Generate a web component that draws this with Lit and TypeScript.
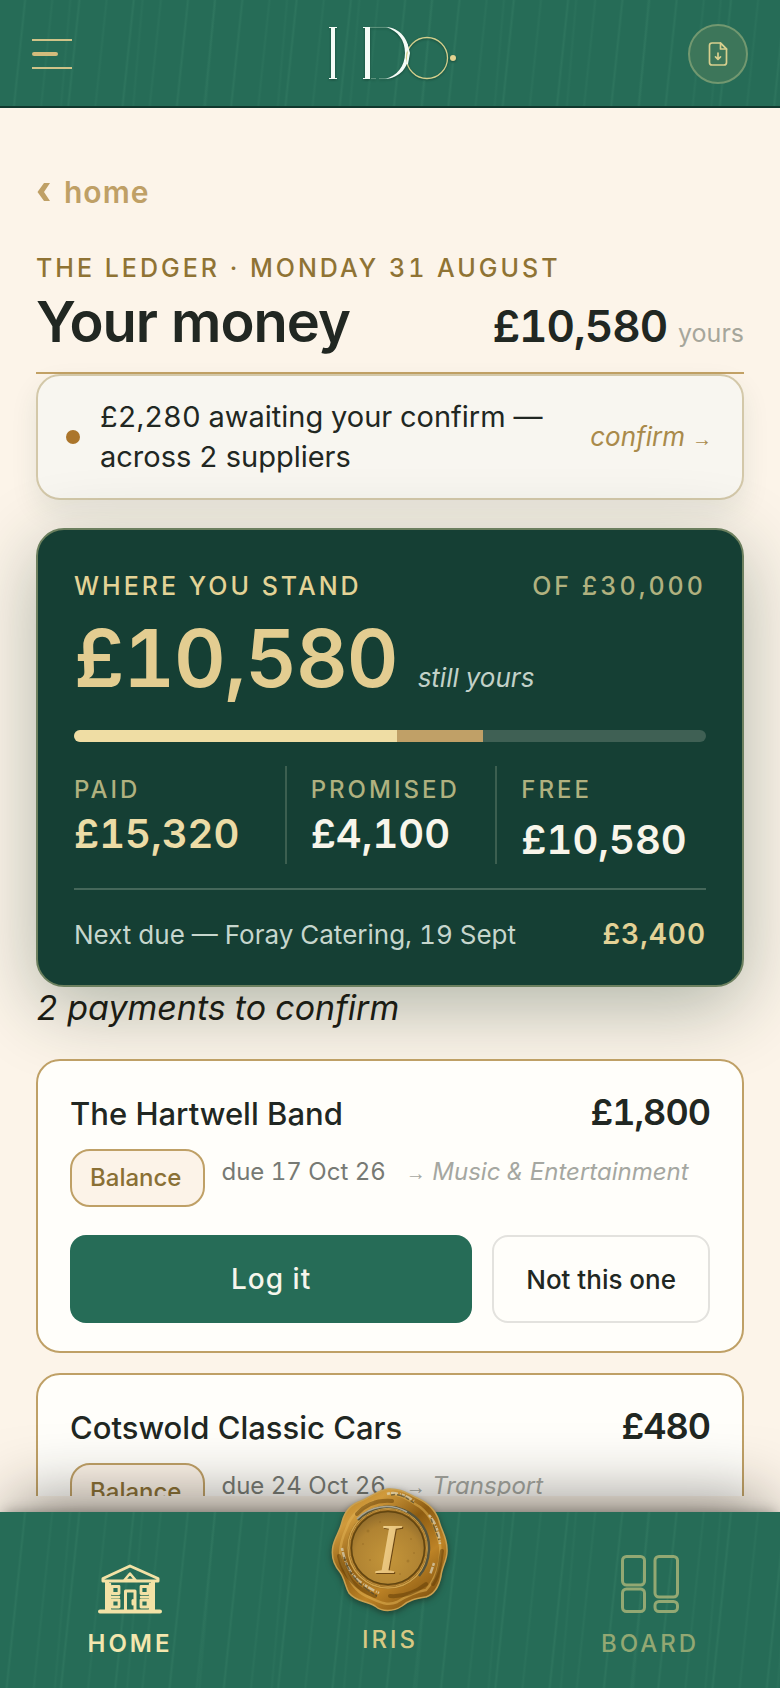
import { LitElement, html, css, svg } from "lit";
import { customElement, property } from "lit/decorators.js";

interface Payment {
  supplier: string;
  amount: string;
  kind: string;
  due: string;
  category: string;
}

const budget = { total: 30000, paid: 15320, promised: 4100 };

const payments: Payment[] = [
  { supplier: "The Hartwell Band", amount: "£1,800", kind: "Balance", due: "due 17 Oct 26", category: "Music & Entertainment" },
  { supplier: "Cotswold Classic Cars", amount: "£480", kind: "Balance", due: "due 24 Oct 26", category: "Transport" },
];

const pounds = (n: number) => `£${n.toLocaleString("en-GB")}`;
const share = (n: number) => `width:${(n / budget.total) * 100}%`;

const logo = svg`
  <svg class="logo" viewBox="0 0 128 58" width="128" height="58" role="img" aria-label="I Do">
    <g fill="#f4fbf6">
      <rect x="2" y="2" width="4" height="52" />
      <rect x="0" y="2" width="8" height="1" />
      <rect x="0" y="53" width="8" height="1" />
      <rect x="36" y="2" width="5" height="52" />
      <rect x="34" y="2" width="7" height="1" />
      <rect x="34" y="53" width="7" height="1" />
      <path d="M57 2C71 3 80 14 80 28S71 53 56 54C68 51 76 41 76 28S69 6 57 2Z" />
    </g>
    <path d="M41 2.400H58M42 53.600H47M50 53.600H57" stroke="#7fae97" stroke-width=".7" fill="none" />
    <circle cx="98" cy="33" r="20.500" fill="none" stroke="#d3cf8d" stroke-width="1.300" />
    <path d="M77.500 19L80 28L78 39" fill="none" stroke="#f4fbf6" stroke-width="2" />
    <circle cx="124" cy="33" r="3" fill="#e3d391" />
  </svg>`;

const fileIcon = svg`
  <svg viewBox="0 0 24 24" width="24" height="24" fill="none" stroke="#d8cf8e" stroke-width="1.700" stroke-linecap="round" stroke-linejoin="round" aria-hidden="true">
    <path d="M14.500 1H6Q3.500 1 3.500 3.500V20.500Q3.500 23 6 23H18Q20.500 23 20.500 20.500V7Z" />
    <path d="M14.500 1V7H20.500Z" />
    <path d="M12 11V17M9.500 14.800L12 17.300L14.500 14.800" />
  </svg>`;

const homeIcon = svg`
  <svg viewBox="0 0 64 50" width="64" height="50" fill="none" stroke="#f3e2a6" stroke-width="3" stroke-linecap="round" stroke-linejoin="round" aria-hidden="true">
    <path d="M5 17V14.500L32 2L60 14.500V17Z" />
    <path d="M26.500 16L32 9.500L37.500 16Z" stroke-width="2.500" />
    <path d="M9 18V46M55 18V46M2 47.500H62" stroke-width="4" />
    <path d="M14 22.500H21V29.500H14ZM43 22.500H50V29.500H43ZM14 36H21V43H14ZM43 36H50V43H43Z" stroke-width="2.800" />
    <path d="M12 20V46M14 33H21M43 33H50M52 20V46" stroke-width="2.400" />
    <path d="M27.500 46V27H37V46" />
    <path d="M35 36.500V40" stroke-width="3" />
  </svg>`;

const boardIcon = svg`
  <svg viewBox="0 0 60 60" width="60" height="60" fill="none" stroke="#93a873" stroke-width="3" aria-hidden="true">
    <rect x="2.500" y="2.500" width="22" height="28.500" rx="4" />
    <rect x="2.500" y="35" width="22" height="22.500" rx="4" />
    <rect x="35" y="2.500" width="22.500" height="40.500" rx="4" />
    <rect x="35" y="47.500" width="22.500" height="10" rx="4" />
  </svg>`;

const seal = svg`
  <svg class="seal" viewBox="0 0 120 124" width="120" height="124" aria-hidden="true">
    <defs>
      <linearGradient id="rim" x1=".1" y1="0" x2=".8" y2="1">
        <stop offset="0" stop-color="#b98122" />
        <stop offset=".2" stop-color="#d09a3c" />
        <stop offset=".45" stop-color="#8d5c12" />
        <stop offset=".7" stop-color="#bd8326" />
        <stop offset="1" stop-color="#7c4f0e" />
      </linearGradient>
      <radialGradient id="face" cx=".5" cy=".65" r=".65">
        <stop offset="0" stop-color="#c4953a" />
        <stop offset=".7" stop-color="#b08332" />
        <stop offset="1" stop-color="#8f6a2a" />
      </radialGradient>
      <linearGradient id="letter" x1="0" y1="0" x2="1" y2="1">
        <stop offset="0" stop-color="#f3d896" />
        <stop offset="1" stop-color="#e0b468" />
      </linearGradient>
    </defs>
    <path d="M58 1C70 0 78 6 87 10C98 15 106 23 109 33C111 42 117 49 117 61C118 71 112 78 111 88C109 98 105 106 96 109C85 111 79 112 72 118C63 124 52 124 45 118C37 113 26 114 19 105C15 98 15 91 10 84C3 76 1 68 3 58C5 49 10 43 12 34C15 22 22 16 31 13C41 9 48 2 58 1Z" fill="url(#rim)" stroke="#c9a050" stroke-width="1.500" />
    <path d="M58 6C70 5 80 13 90 19C102 28 106 42 110 57C112 74 105 92 96 102C84 104 75 109 67 114C56 119 46 112 36 108C24 103 20 92 14 80C7 68 11 52 17 39C22 24 33 19 44 13" fill="none" stroke="#e0b052" stroke-width="2.500" opacity=".55" />
    <path d="M27 26C37 15 50 12 62 13M9 68C13 88 28 102 45 108M103 96C109 88 110 76 112 63M60 108C74 109 86 104 96 96" fill="none" stroke="#5f3b06" stroke-width="4" opacity=".5" stroke-linecap="round" />
    <path d="M57 6C66 3 77 8 84 13M99 27C106 35 109 45 110 56M104 75L100 87M12 60C17 86 27 94 49 105" fill="none" stroke="#dcd6bd" stroke-width="2.500" stroke-dasharray="3 1 7 2 1 1" opacity=".7" />
    <path d="M61 7C70 5 77 10 84 15M101 31L109 52M14 69C19 86 27 96 47 108" fill="none" stroke="#4b4731" stroke-width="1.500" stroke-dasharray="4 2 8 1" opacity=".7" />
    <circle cx="58" cy="60" r="41" fill="#8c601a" />
    <circle cx="58" cy="60" r="40" fill="none" stroke="#d0a24a" stroke-width="1.500" />
    <path d="M28 32A41 41 0 0 1 99 62Q98 78 89 88" fill="none" stroke="#56543c" stroke-width="2.500" />
    <path d="M27 31A41 41 0 0 1 77 24" fill="none" stroke="#aaa591" stroke-width="1.500" />
    <circle cx="58" cy="60" r="36.500" fill="url(#face)" stroke="#614511" stroke-width="1.500" />
    <circle cx="58" cy="60" r="38.500" fill="none" stroke="#c39441" stroke-width="1" />
    <g fill="#80591b" opacity=".3">
      <circle cx="38" cy="43" r="1.500" /><circle cx="81" cy="51" r="1" /><circle cx="78" cy="73" r="1.500" />
      <circle cx="40" cy="72" r="1" /><circle cx="50" cy="34" r="1" /><circle cx="33" cy="56" r="1" />
      <circle cx="70" cy="86" r="1" /><circle cx="84" cy="65" r="1" />
    </g>
    <text class="monogram dark" x="60" y="86" text-anchor="middle">I</text>
    <text class="monogram" x="59" y="85" text-anchor="middle">I</text>
  </svg>`;

const arrow = css`
  .arrow { font-family: "Liberation Sans", sans-serif; font-size: 20px; font-style: normal; line-height: 20px; }
`;

@customElement("payment-card")
export class PaymentCard extends LitElement {
  @property({ attribute: false }) payment!: Payment;

  static styles = [arrow, css`
    :host { display: block; }
    * { box-sizing: border-box; }
    .card {
      border: 2px solid #bfa066;
      border-radius: 24px;
      background: #fffefa;
      padding: 30px 32px 28px;
      color: #212722;
    }
    .top { display: flex; justify-content: space-between; align-items: baseline; }
    .name { margin: 0; font-size: 31px; font-weight: 500; line-height: 36px; }
    .amount { font-size: 36px; font-weight: 600; line-height: 42px; letter-spacing: -1px; }
    .meta { display: flex; align-items: flex-start; margin-top: 16px; font-size: 24px; line-height: 46px; white-space: nowrap; }
    .pill {
      border: 2px solid #bfa066;
      border-radius: 20px;
      background: #fcf3e8;
      color: #8a7035;
      font-weight: 500;
      line-height: 32px;
      padding: 11px 22px 11px 18px;
    }
    .due { margin-left: 16px; color: #777a74; }
    .category { margin-left: 20px; color: #a5a7a1; font-style: italic; }
    .actions { display: flex; gap: 20px; margin-top: 28px; }
    button { height: 88px; border-radius: 16px; font-family: inherit; cursor: pointer; }
    .log { flex: 1; border: 0; background: #266c57; color: #f6f6ec; font-size: 28px; font-weight: 500; letter-spacing: 1px; }
    .skip { border: 2px solid #e3e2de; background: #fffefa; color: #212722; font-size: 26px; font-weight: 500; padding: 0 32px; }
  `];

  render() {
    const p = this.payment;
    return html`
      <article class="card">
        <div class="top">
          <h3 class="name">${p.supplier}</h3>
          <span class="amount">${p.amount}</span>
        </div>
        <div class="meta">
          <span class="pill">${p.kind}</span>
          <span class="due">${p.due}</span>
          <span class="category"><span class="arrow">→</span> ${p.category}</span>
        </div>
        <div class="actions">
          <button class="log" type="button">Log it</button>
          <button class="skip" type="button">Not this one</button>
        </div>
      </article>`;
  }
}

@customElement("app-root")
export class AppRoot extends LitElement {
  static styles = [arrow, css`
    :host {
      display: flex;
      flex-direction: column;
      height: 100vh;
      overflow: hidden;
      background: #fcf4e9;
      color: #212722;
      font-family: Inter, "Liberation Sans", sans-serif;
      font-variant-numeric: tabular-nums;
    }
    * { box-sizing: border-box; }
    a { text-decoration: none; color: inherit; }
    .silk {
      background:
        repeating-linear-gradient(96deg, transparent 0 23px, rgba(120, 200, 160, 0.09) 25px, transparent 27px, transparent 50px, rgba(120, 200, 160, 0.06) 52px, transparent 54px),
        repeating-linear-gradient(95deg, transparent 0 68px, rgba(120, 200, 160, 0.05) 70px, transparent 72px),
        #266c57;
    }
    .bar {
      display: grid;
      grid-template-columns: 1fr auto 1fr;
      align-items: center;
      flex: none;
      height: 108px;
      padding: 2px 32px 0;
      border-bottom: 2px solid #10382d;
    }
    .menu { display: grid; justify-items: start; gap: 11px; width: 40px; padding: 0; border: 0; background: none; cursor: pointer; }
    .line { width: 40px; height: 2px; background: #cfc388; }
    .line.short { width: 26px; height: 4px; border-radius: 2px; background: #d3bc7c; }
    .logo { display: block; margin-left: 6px; filter: drop-shadow(0 1px 1px rgba(10, 50, 35, 0.6)); }
    .export {
      justify-self: end;
      display: grid;
      place-items: center;
      width: 60px;
      height: 60px;
      padding: 0;
      border: 2px solid #729870;
      border-radius: 50%;
      background: #3d765a;
      cursor: pointer;
    }
    main { flex: 1; min-height: 0; overflow: hidden; padding: 68px 36px 0; margin-bottom: 16px; }
    .back { display: flex; gap: 13px; align-items: center; width: max-content; color: #bfa066; font-size: 30px; font-weight: 600; line-height: 32px; letter-spacing: 1px; }
    .eyebrow { margin: 44px 0 6px; color: #8f7334; font-size: 25px; font-weight: 500; line-height: 32px; letter-spacing: 3px; }
    .heading { display: flex; justify-content: space-between; align-items: baseline; padding-bottom: 18px; border-bottom: 2px solid #c3a266; }
    h1 { margin: 0; font-size: 56px; font-weight: 600; line-height: 64px; letter-spacing: -1px; }
    .left { font-size: 44px; font-weight: 600; line-height: 48px; letter-spacing: -1px; }
    .unit { color: #a6a69b; font-size: 25px; font-weight: 400; line-height: 32px; letter-spacing: 0; }
    .notice {
      display: flex;
      align-items: center;
      padding: 21px 30px 21px 28px;
      border: 2px solid #d3c8a9;
      border-radius: 24px;
      background: #f8f6f0;
      box-shadow: 0 12px 28px rgba(20, 63, 52, 0.09);
      font-size: 29px;
      line-height: 40px;
    }
    .dot { flex: none; width: 14px; height: 14px; margin-right: 20px; border-radius: 50%; background: #ab752b; }
    .message { flex: 1; padding-right: 28px; }
    .confirm { color: #a98a4a; font-size: 26px; font-style: italic; white-space: nowrap; }
    .stand {
      position: relative;
      margin-top: 28px;
      padding: 40px 36px 34px;
      border: 2px solid #6c805f;
      border-radius: 28px;
      background: #153f34;
      box-shadow: 0 20px 76px rgba(20, 50, 35, 0.32);
    }
    .row { display: flex; justify-content: space-between; align-items: baseline; line-height: 32px; }
    .cap { font-size: 24px; font-weight: 500; line-height: 32px; letter-spacing: 3px; color: #e3d396; }
    .row .cap { font-size: 25px; }
    .cap.soft { color: #b0b17f; }
    .figure { display: flex; align-items: baseline; gap: 20px; margin: 16px 0 32px; line-height: 32px; }
    .big { color: #e3cd91; font-size: 80px; font-weight: 600; line-height: 80px; letter-spacing: -1px; }
    .still { color: #c2d1c8; font-size: 26px; font-style: italic; }
    .meter { display: flex; height: 12px; border-radius: 6px; overflow: hidden; background: #3f6054; }
    .paid { background: #efdda4; }
    .promised { background: #c0a067; }
    .stats { display: grid; grid-template-columns: repeat(3, 1fr); margin: 24px 0; }
    .stat { padding-top: 8px; }
    .stat + .stat { border-left: 2px solid #3c5f50; padding-left: 24px; }
    .value { margin-top: 4px; font-size: 40px; font-weight: 600; line-height: 48px; color: #f8f5ea; }
    .value.gold { color: #ecdca6; }
    .value.free { margin-top: 10px; }
    .next { padding-top: 28px; border-top: 2px solid #45675a; color: #c6d6cd; font-size: 26px; }
    .sum { color: #e3d296; font-size: 28px; font-weight: 600; letter-spacing: 1px; }
    h2 { position: relative; margin: 0 0 30px; font-size: 34px; font-weight: 400; font-style: italic; line-height: 42px; color: #1b1c14; }
    .list { position: relative; display: grid; gap: 20px; }
    nav {
      position: relative;
      display: grid;
      grid-template-columns: repeat(3, 1fr);
      align-items: end;
      flex: none;
      height: 176px;
      padding-bottom: 28px;
      box-shadow: 0 -4px 12px -4px rgba(30, 25, 20, 0.35), 0 -28px 64px -16px rgba(30, 25, 20, 0.5);
    }
    .tab { display: grid; justify-items: center; gap: 14px; font-size: 24px; font-weight: 500; line-height: 32px; letter-spacing: 3px; color: #93a873; }
    .tab.active { color: #f3e6ae; font-weight: 600; }
    .tab.iris { gap: 12px; margin: -24px 0 4px; color: #d8c983; }
    .seal { filter: drop-shadow(0 2px 3px rgba(20, 20, 10, 0.5)); }
    .monogram { font: italic 72px "Liberation Serif", serif; fill: url(#letter); }
    .monogram.dark { fill: #6b4714; }
  `];

  render() {
    const free = budget.total - budget.paid - budget.promised;
    return html`
      <header class="bar silk">
        <button class="menu" type="button" aria-label="Menu">
          <span class="line"></span><span class="line short"></span><span class="line"></span>
        </button>
        ${logo}
        <button class="export" type="button" aria-label="Export">${fileIcon}</button>
      </header>
      <main>
        <a class="back" href="#home">
          <svg width="15" height="20" viewBox="0 0 15 20" aria-hidden="true"><path d="M8 1H14L8 10L14 19H8L1.500 10Z" fill="#bfa066" /></svg>
          <span>home</span>
        </a>
        <p class="eyebrow">THE LEDGER · MONDAY 31 AUGUST</p>
        <div class="heading">
          <h1>Your money</h1>
          <span class="left">${pounds(free)} <span class="unit">yours</span></span>
        </div>
        <section class="notice">
          <span class="dot"></span>
          <span class="message">£2,280 awaiting your confirm — across 2 suppliers</span>
          <a class="confirm" href="#confirm">confirm <span class="arrow">→</span></a>
        </section>
        <section class="stand">
          <div class="row">
            <span class="cap">WHERE YOU STAND</span>
            <span class="cap soft">OF ${pounds(budget.total)}</span>
          </div>
          <div class="figure">
            <span class="big">${pounds(free)}</span>
            <span class="still">still yours</span>
          </div>
          <div class="meter">
            <span class="paid" style=${share(budget.paid)}></span>
            <span class="promised" style=${share(budget.promised)}></span>
          </div>
          <div class="stats">
            <div class="stat"><div class="cap soft">PAID</div><div class="value gold">${pounds(budget.paid)}</div></div>
            <div class="stat"><div class="cap soft">PROMISED</div><div class="value">${pounds(budget.promised)}</div></div>
            <div class="stat"><div class="cap soft">FREE</div><div class="value free">${pounds(free)}</div></div>
          </div>
          <div class="row next">
            <span>Next due — Foray Catering, 19 Sept</span>
            <span class="sum">£3,400</span>
          </div>
        </section>
        <h2>2 payments to confirm</h2>
        <div class="list">
          ${payments.map((p) => html`<payment-card .payment=${p}></payment-card>`)}
        </div>
      </main>
      <nav class="silk">
        <a class="tab active" href="#home">${homeIcon}<span>HOME</span></a>
        <a class="tab iris" href="#iris">${seal}<span>IRIS</span></a>
        <a class="tab" href="#board">${boardIcon}<span>BOARD</span></a>
      </nav>`;
  }
}
